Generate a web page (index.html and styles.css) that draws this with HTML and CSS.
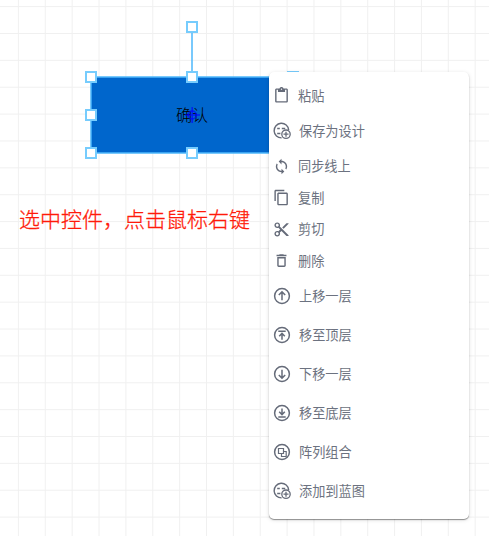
FILE: index.html
```
<!DOCTYPE html>
<html lang="zh-CN">
<head>
<meta charset="utf-8">
<title>画布</title>
<link rel="stylesheet" href="styles.css">
</head>
<body>
<svg width="0" height="0" class="defs">
  <symbol id="design" viewBox="0 0 18 18">
    <path d="M15.700 8A7.300 7.300 0 1 0 8.600 15.900M4.200 6.500h2.600M4.200 11.500h3.200M8.800 6.500h3.400" fill="none" stroke="currentColor" stroke-width="1.4"/>
    <circle cx="13" cy="12.200" r="4.200" fill="#fff" stroke="currentColor" stroke-width="1.300"/>
    <path d="M13 9.700v5M10.500 12.200h5" stroke="currentColor" stroke-width="1.300"/>
  </symbol>
</svg>
<main class="canvas">
  <svg class="grid" width="489" height="536">
    <defs>
      <pattern id="cell" x="17.9" y="6.1" width="26.87" height="26.87" patternUnits="userSpaceOnUse">
        <path d="M0 .5H26.87M.5 0V26.87" stroke="#f0f0f0" stroke-width="1"/>
      </pattern>
    </defs>
    <rect width="489" height="536" fill="url(#cell)"/>
  </svg>

  <div class="shape">确认</div>
  <svg class="selection" width="489" height="536">
    <path class="pivot" d="M192.200 107v16M185 115h15"/>
    <circle class="pivot" cx="192.200" cy="115" r="4"/>
    <path class="outline" d="M192 27V77M91 77H293V153H91Z"/>
    <g class="handles">
      <rect x="187" y="22" width="10" height="10"/>
      <rect x="86" y="72" width="10" height="10"/>
      <rect x="187" y="72" width="10" height="10"/>
      <rect x="288" y="72" width="10" height="10"/>
      <rect x="86" y="110" width="10" height="10"/>
      <rect x="86" y="148" width="10" height="10"/>
      <rect x="187" y="148" width="10" height="10"/>
    </g>
  </svg>
  <p class="note">选中控件，点击鼠标右键</p>

  <ul class="menu">
    <li class="item"><svg viewBox="0 0 24 24"><path d="M19 2h-4.18C14.4.84 13.3 0 12 0S9.6.84 9.18 2H5c-1.1 0-2 .9-2 2v16c0 1.1.9 2 2 2h14c1.1 0 2-.9 2-2V4c0-1.1-.9-2-2-2zm-7 0c.55 0 1 .45 1 1s-.45 1-1 1-1-.45-1-1 .45-1 1-1zm7 18H5V4h2v3h10V4h2v16z"/></svg><span>粘贴</span></li>
    <li class="item tall"><svg><use href="#design"/></svg><span>保存为设计</span></li>
    <li class="item"><svg viewBox="0 0 24 24"><path d="M12 4V1L8 5l4 4V6c3.31 0 6 2.69 6 6 0 1.01-.25 1.97-.7 2.8l1.46 1.46C19.54 15.03 20 13.57 20 12c0-4.42-3.58-8-8-8zm0 14c-3.31 0-6-2.69-6-6 0-1.01.25-1.97.7-2.8L5.24 7.74C4.46 8.97 4 10.43 4 12c0 4.42 3.58 8 8 8v3l4-4-4-4v3z"/></svg><span>同步线上</span></li>
    <li class="item"><svg viewBox="0 0 24 24"><path d="M16 1H4c-1.1 0-2 .9-2 2v14h2V3h12V1zm3 4H8c-1.1 0-2 .9-2 2v14c0 1.1.9 2 2 2h11c1.1 0 2-.9 2-2V7c0-1.100-.9-2-2-2zm0 16H8V7h11v14z"/></svg><span>复制</span></li>
    <li class="item"><svg viewBox="0 0 24 24"><path d="M9.640 7.640c.23-.5.360-1.050.360-1.640 0-2.210-1.790-4-4-4S2 3.790 2 6s1.790 4 4 4c.59 0 1.140-.13 1.640-.36L10 12l-2.360 2.360C7.140 14.130 6.590 14 6 14c-2.210 0-4 1.790-4 4s1.790 4 4 4 4-1.790 4-4c0-.59-.13-1.140-.36-1.640L12 14l7 7h3v-1L9.640 7.640zM6 8c-1.100 0-2-.89-2-2s.9-2 2-2 2 .89 2 2-.9 2-2 2zm0 12c-1.100 0-2-.89-2-2s.9-2 2-2 2 .89 2 2-.9 2-2 2zM19 3l-6 6 2 2 7-7V3z"/></svg><span>剪切</span></li>
    <li class="item"><svg viewBox="0 0 24 24"><path d="M6 19c0 1.100.9 2 2 2h8c1.100 0 2-.9 2-2V7H6v12zM8 9h8v10H8V9zm7.500-5l-1-1h-5l-1 1H5v2h14V4z"/></svg><span>删除</span></li>
    <li class="item tall"><svg class="ring" viewBox="0 0 18 18"><circle cx="9" cy="9" r="7.4"/><path d="M9 13.300V5M5.800 8L9 4.900 12.200 8"/></svg><span>上移一层</span></li>
    <li class="item tall"><svg class="ring" viewBox="0 0 18 18"><circle cx="9" cy="9" r="7.4"/><path d="M5.300 5.300h7.400M9 13.700V8M6.200 10.200L9 7.400l2.800 2.800"/></svg><span>移至顶层</span></li>
    <li class="item tall"><svg class="ring" viewBox="0 0 18 18"><circle cx="9" cy="9" r="7.4"/><path d="M9 4.700V13M5.800 10L9 13.100 12.200 10"/></svg><span>下移一层</span></li>
    <li class="item tall"><svg class="ring" viewBox="0 0 18 18"><circle cx="9" cy="9" r="7.4"/><path d="M5.300 12.900h7.400M9 4.500V10M6.200 7.800L9 10.600l2.800-2.800"/></svg><span>移至底层</span></li>
    <li class="item tall"><svg class="ring thin" viewBox="0 0 18 18"><circle cx="9" cy="9" r="7.4"/><path d="M5.500 5.500h5v5h-5zM10.500 8.500h2.700v5H8.500v-3"/></svg><span>阵列组合</span></li>
    <li class="item tall"><svg><use href="#design"/></svg><span>添加到蓝图</span></li>
  </ul>
</main>
</body>
</html>
```
FILE: styles.css
```
body {
  margin: 0;
  background: #fff;
  font-family: "Noto Sans CJK SC", sans-serif;
  font-weight: 300;
}

.defs {
  position: absolute;
}

.canvas {
  position: relative;
  width: 489px;
  height: 536px;
  overflow: hidden;
}

.grid,
.selection {
  position: absolute;
  left: 0;
  top: 0;
}

.shape {
  position: absolute;
  left: 91px;
  top: 77px;
  display: flex;
  align-items: center;
  justify-content: center;
  box-sizing: border-box;
  width: 202px;
  height: 76px;
  padding-bottom: 2px;
  background: #0066cc;
  color: #000;
  font-size: 16px;
}

.outline {
  fill: none;
  stroke: #4db8fb;
  stroke-width: 1.5;
}

.pivot {
  fill: none;
  stroke: #0000ff;
  stroke-opacity: 0.7;
  stroke-width: 1.5;
}

.handles {
  fill: #fff;
  stroke: #76ccfd;
  stroke-width: 2;
}

.note {
  position: absolute;
  left: 19px;
  top: 202px;
  margin: 0;
  color: #ff1a0a;
  font-size: 21px;
  line-height: 32px;
  white-space: nowrap;
  -webkit-text-stroke: 0.3px #ff1a0a;
}

.menu {
  position: absolute;
  left: 269px;
  top: 72px;
  box-sizing: border-box;
  width: 200px;
  height: 447px;
  margin: 0;
  padding: 8px 4px;
  border-radius: 5px;
  background: #fff;
  box-shadow: 0 1px 1px rgba(0, 0, 0, 0.4), 0 1px 4px rgba(0, 0, 0, 0.13);
  list-style: none;
}

.item {
  display: flex;
  align-items: center;
  gap: 8px;
  height: 31.5px;
  color: #656b79;
  font-size: 13.2px;
  line-height: 20px;
}

.item span {
  color: #6c7280;
  font-weight: 400;
}

.item svg {
  width: 17px;
  height: 17px;
  fill: currentColor;
}

.tall {
  height: 39px;
}

.tall span {
  padding-bottom: 1px;
}

.tall svg {
  width: 18px;
  height: 18px;
}

.item .ring {
  fill: none;
  stroke: currentColor;
  stroke-width: 1.5;
}

.item .thin path {
  stroke-width: 1.2;
}
```
